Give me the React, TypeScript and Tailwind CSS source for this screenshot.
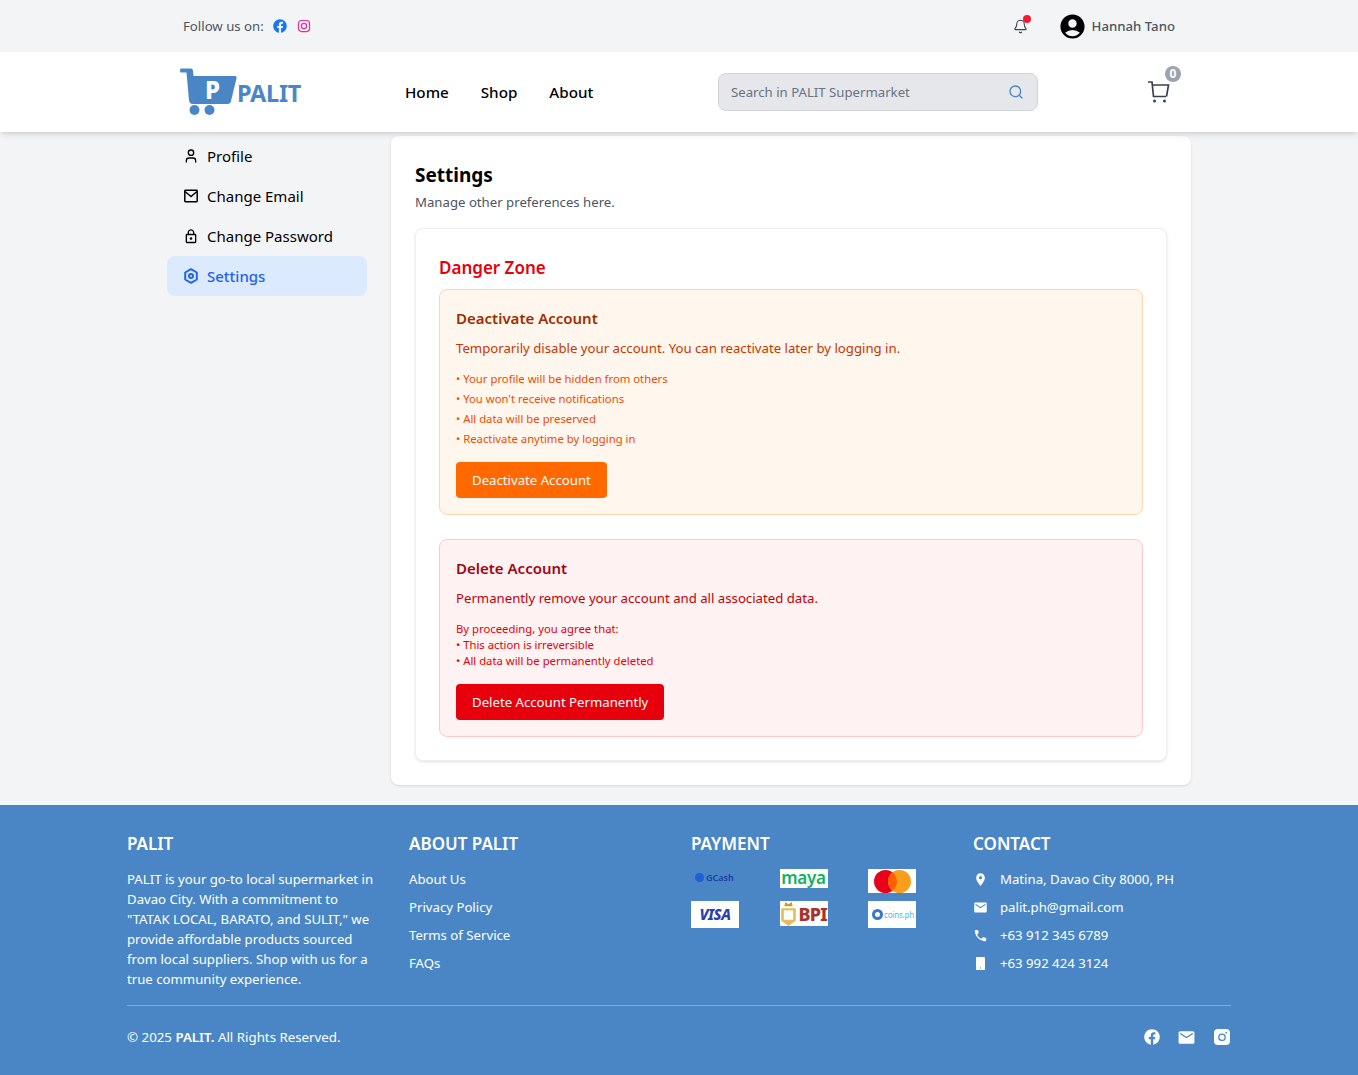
import { Bell, Search } from "lucide-react"
import { FaFacebook } from "react-icons/fa"
import { MdAccountCircle, MdEmail, MdLocationOn, MdOutlineLock, MdPhone } from "react-icons/md"
import { LuUser } from "react-icons/lu"

const font = "font-['Noto_Sans','Open_Sans',sans-serif]"

function InstaIcon({ className }: { className?: string }) {
    return (
        <svg viewBox="0 0 16 16" fill="none" stroke="currentColor" strokeWidth="1.4" className={className}>
            <rect x="1.7" y="1.7" width="12.6" height="12.6" rx="3.4" />
            <circle cx="8" cy="8" r="3" />
            <circle cx="11.6" cy="4.4" r="0.5" fill="currentColor" stroke="none" />
        </svg>
    )
}

function InstaSolid() {
    return (
        <svg viewBox="0 0 16 16" className="w-4 h-4">
            <rect x="0" y="0" width="16" height="16" rx="4" fill="#fff" />
            <circle cx="8" cy="8.3" r="3.2" fill="none" stroke="#4a86c6" strokeWidth="1.3" />
            <circle cx="12.2" cy="3.8" r="0.9" fill="#4a86c6" />
        </svg>
    )
}

function MailOutline() {
    return (
        <svg viewBox="0 0 14 14" fill="none" stroke="#000" strokeWidth="1.5" className="w-[14px] h-[14px]">
            <rect x="0.8" y="1.3" width="12.4" height="11.4" rx="0.6" />
            <path d="M1 2.5 L7 7.500 L13 2.500" />
        </svg>
    )
}

function PhoneSolid() {
    return (
        <svg viewBox="0 0 15 15" className="w-[15px] h-[15px] shrink-0">
            <rect x="3" y="1" width="9" height="13" rx="0.8" fill="#fff" />
            <rect x="7" y="11.500" width="1" height="1" fill="#4a86c6" />
        </svg>
    )
}

function Logo() {
    return (
        <svg viewBox="0 0 58 48" className="w-[58px] h-[48px]">
            <path d="M1 1.5 H11 Q12.5 1.5 13 3.5 L13.5 9 H55 Q57 9 56.5 11.5 L51 34 Q50.5 37 47.500 37 H13 Q9.500 37 9 33.500 L6.500 5.500 H1 Q0 5.500 0 3.500 Q0 1.500 1 1.500 Z" fill="#4a86c6" />
            <circle cx="14.500" cy="43" r="5" fill="#4a86c6" />
            <circle cx="29.500" cy="43" r="5" fill="#4a86c6" />
            <text x="25" y="32" fontSize="24" fontWeight="800" fill="#fff" fontFamily="Noto Sans" >P</text>
        </svg>
    )
}

function Cart() {
    return (
        <svg viewBox="0 0 24 24" fill="none" stroke="#374151" strokeWidth="1.7" className="w-6 h-6">
            <path d="M2 2 H6 L7.500 16.500 H20" />
            <path d="M6.300 5 H22.500 L20.500 16.500" />
            <circle cx="8.500" cy="21" r="1.500" fill="#374151" stroke="none" />
            <circle cx="18.500" cy="21" r="1.500" fill="#374151" stroke="none" />
        </svg>
    )
}

function HexIcon() {
    return (
        <svg viewBox="0 0 16 16" fill="none" stroke="#2563eb" strokeWidth="2" className="w-4 h-4">
            <path d="M8 1.200 L13.800 4.500 V11.500 L8 14.800 L2.200 11.500 V4.500 Z" strokeLinejoin="round" />
            <circle cx="8" cy="8" r="2" />
        </svg>
    )
}

function PaymentLogos() {
    return (
        <div className="grid grid-cols-[48px_48px_48px] justify-between gap-y-2 w-[225px]">
            <div className="h-6 flex items-start pt-[3px] pl-1 gap-[2px]">
                <div className="w-[9px] h-[9px] rounded-full bg-[#1d5fd6] mt-[1px] shrink-0"></div>
                <span className="text-[9px] leading-[11px] font-semibold text-[#1b3fa8]">GCash</span>
            </div>
            <div className="h-[19px] bg-white flex items-start justify-center">
                <span className="text-[17px] leading-[17px] font-semibold text-[#0fb25f] tracking-[-0.3px]">maya</span>
            </div>
            <div className="h-6 bg-white flex items-center justify-center">
                <svg viewBox="0 0 37 23" className="w-[37px] h-[23px]">
                    <circle cx="11.500" cy="11.500" r="11.500" fill="#eb001b" />
                    <circle cx="25.500" cy="11.500" r="11.500" fill="#f79e1b" />
                    <path d="M18.500 2.400 A11.500 11.500 0 0 1 18.500 20.600 A11.500 11.500 0 0 1 18.500 2.400 Z" fill="#ff5f00" />
                </svg>
            </div>
            <div className="h-[27px] bg-white flex items-center justify-center">
                <span className="text-[15px] font-extrabold italic text-[#2a3fae] tracking-[-0.5px]">VISA</span>
            </div>
            <div className="h-[25px] bg-white flex items-center gap-[2px]">
                <svg viewBox="0 0 16 24" className="w-[17px] h-[25px] shrink-0">
                    <path d="M1 7 H15 V19 L8 24 L1 19 Z" fill="#e4bd5a" />
                    <path d="M4 5 L5 1 L8 3 L11 1 L12 5 Z" fill="#c99a32" />
                    <rect x="3.500" y="9" width="9" height="9" fill="#fff" />
                </svg>
                <span className="text-[18px] leading-[20px] font-extrabold text-[#a8322d] tracking-[-0.8px]">BPI</span>
            </div>
            <div className="h-[27px] bg-white flex items-center pl-1 gap-[1px]">
                <div className="w-[11px] h-[11px] rounded-full border-[3px] border-[#3b78c4] shrink-0"></div>
                <span className="text-[8px] text-[#45c3f0] tracking-[-0.2px]">coins.ph</span>
            </div>
        </div>
    )
}

export default function App() {
    const sideItems = [
        { label: "Profile", icon: <LuUser size={16} className="text-black" /> },
        { label: "Change Email", icon: <MailOutline /> },
        { label: "Change Password", icon: <MdOutlineLock size={17} className="text-black" /> },
    ]

    return (
        <div className={`${font} min-h-screen bg-[#f3f4f6] flex flex-col`}>
            <div className="h-[52px] bg-[#f3f4f6]">
                <div className="max-w-5xl mx-auto h-full px-4 flex items-center justify-between">
                    <div className="flex items-center">
                        <span className="text-[13.2px] text-[#4b5563] pt-[1px]">Follow us on:</span>
                        <FaFacebook size={14} className="text-[#1877f2] ml-[9px]" />
                        <InstaIcon className="w-[14px] h-[14px] text-[#ec2f92] ml-[10px]" />
                    </div>
                    <div className="flex items-center">
                        <div className="relative mr-[30px]">
                            <Bell size={15} strokeWidth={1.7} className="text-[#374151]" />
                            <div className="absolute -top-[4px] left-[10px] w-2 h-2 rounded-full bg-[#ef1c2e]"></div>
                        </div>
                        <MdAccountCircle size={29} className="text-black" />
                        <span className="text-[13.2px] font-medium text-[#4b5563] ml-[5px] pt-[1px]">Hannah Tano</span>
                    </div>
                </div>
            </div>

            <header className="h-20 bg-white shadow-md relative z-10">
                <div className="max-w-5xl mx-auto h-full flex items-center">
                    <div className="flex items-center ml-[13px] w-[225px] pb-[2px]">
                        <Logo />
                        <span className="text-[23.5px] font-bold text-[#4a86c6] tracking-[-0.3px] mt-[5px] -ml-[1px]">PALIT</span>
                    </div>
                    <nav className="flex items-center gap-8 w-[190px]">
                        <a className="text-[15.2px] font-medium text-black">Home</a>
                        <a className="text-[15.2px] font-medium text-black">Shop</a>
                        <a className="text-[15.2px] font-medium text-black">About</a>
                    </nav>
                    <div className="ml-[123px] w-80 h-[38px] rounded-lg bg-[#e5e7eb] border border-[#d1d5db] flex items-center justify-between px-3">
                        <span className="text-[13.2px] text-[#6b7280] pt-[1px]">Search in PALIT Supermarket</span>
                        <Search size={16} className="text-[#4a86c6] mr-[1px]" />
                    </div>
                    <div className="relative ml-[108px] mt-0">
                        <Cart />
                        <div className="absolute -top-[14px] left-[19px] w-4 h-4 rounded-full bg-[#9ca3af] text-white text-[12px] font-bold flex items-center justify-center">0</div>
                    </div>
                </div>
            </header>

            <main className="max-w-5xl w-full mx-auto flex gap-6 pt-1 pb-5">
                <aside className="w-[200px] shrink-0">
                    {sideItems.map((item) => (
                        <div key={item.label} className="h-10 px-4 flex items-center gap-[8px] text-black">
                            <span className="w-4 flex justify-center">{item.icon}</span>
                            <span className="text-[15px]">{item.label}</span>
                        </div>
                    ))}
                    <div className="h-10 px-4 flex items-center gap-[8px] rounded-lg bg-[#dbeafe] text-[#2563eb]">
                        <HexIcon />
                        <span className="text-[15px] font-medium">Settings</span>
                    </div>
                </aside>

                <section className="w-[800px] bg-white rounded-lg shadow-sm p-6">
                    <h1 className="text-[19px] font-bold text-black leading-[28px] mt-[1px]">Settings</h1>
                    <p className="text-[13.2px] text-[#4b5563] leading-5 mt-[3px]">Manage other preferences here.</p>

                    <div className="mt-[16px] rounded-lg ring-1 ring-inset ring-[#eeeff1] shadow-sm px-6 pt-6 pb-6">
                        <h2 className="text-[17px] font-semibold text-[#e7000b] leading-[28px] mt-[2px]">Danger Zone</h2>

                        <div className="mt-[7px] rounded-lg border border-[#ffd6a8] bg-[#fff7ed] px-4 pt-4 pb-4 h-[226px]">
                            <h3 className="text-[15px] font-semibold text-[#9f2d00] leading-6">Deactivate Account</h3>
                            <p className="text-[13.2px] text-[#ca3500] leading-5 mt-[8px]">Temporarily disable your account. You can reactivate later by logging in.</p>
                            <ul className="mt-[11px] text-[11.3px] text-[#f54900]">
                                <li className="leading-5">• Your profile will be hidden from others</li>
                                <li className="leading-5">• You won't receive notifications</li>
                                <li className="leading-5">• All data will be preserved</li>
                                <li className="leading-5">• Reactivate anytime by logging in</li>
                            </ul>
                            <button className="mt-[13px] h-9 px-4 pt-[1px] rounded bg-[#ff6900] text-white text-[13.2px]">Deactivate Account</button>
                        </div>

                        <div className="mt-6 rounded-lg border border-[#ffc9c9] bg-[#fef2f2] px-4 pt-4 pb-4 h-[198px]">
                            <h3 className="text-[15px] font-semibold text-[#9f0712] leading-6">Delete Account</h3>
                            <p className="text-[13.2px] text-[#c10007] leading-5 mt-[8px]">Permanently remove your account and all associated data.</p>
                            <div className="mt-[13px] text-[11.3px] text-[#e7000b] leading-4">
                                <div>By proceeding, you agree that:</div>
                                <div>• This action is irreversible</div>
                                <div>• All data will be permanently deleted</div>
                            </div>
                            <button className="mt-[15px] h-9 px-4 pt-[1px] rounded bg-[#e7000b] text-white text-[13.2px]">Delete Account Permanently</button>
                        </div>
                    </div>
                </section>
            </main>

            <footer className="h-[270px] bg-[#4a86c6] text-white">
                <div className="max-w-6xl mx-auto px-6 pt-[25px]">
                    <div className="grid grid-cols-4 gap-6 h-[176px] border-b border-white/30">
                        <div>
                            <h4 className="text-[17px] font-semibold leading-[28px]">PALIT</h4>
                            <p className="text-[13.2px] leading-5 mt-[11px] w-[250px]">PALIT is your go-to local supermarket in Davao City. With a commitment to "TATAK LOCAL, BARATO, and SULIT," we provide affordable products sourced from local suppliers. Shop with us for a true community experience.</p>
                        </div>
                        <div>
                            <h4 className="text-[17px] font-semibold leading-[28px]">ABOUT PALIT</h4>
                            <div className="mt-[11px] text-[13.2px] flex flex-col gap-2">
                                <a className="leading-5">About Us</a>
                                <a className="leading-5">Privacy Policy</a>
                                <a className="leading-5">Terms of Service</a>
                                <a className="leading-5">FAQs</a>
                            </div>
                        </div>
                        <div>
                            <h4 className="text-[17px] font-semibold leading-[28px] mb-[11px]">PAYMENT</h4>
                            <PaymentLogos />
                        </div>
                        <div>
                            <h4 className="text-[17px] font-semibold leading-[28px]">CONTACT</h4>
                            <div className="mt-[11px] text-[13.2px] flex flex-col gap-2">
                                <div className="flex items-center gap-3 leading-5"><MdLocationOn size={15} className="shrink-0" />Matina, Davao City 8000, PH</div>
                                <div className="flex items-center gap-3 leading-5"><MdEmail size={15} className="shrink-0" />palit.ph@gmail.com</div>
                                <div className="flex items-center gap-3 leading-5"><MdPhone size={15} className="shrink-0" />+63 912 345 6789</div>
                                <div className="flex items-center gap-3 leading-5"><PhoneSolid />+63 992 424 3124</div>
                            </div>
                        </div>
                    </div>
                    <div className="flex items-center justify-between pt-[21px]">
                        <p className="text-[13.3px] leading-5">© 2025 <span className="font-semibold">PALIT.</span> All Rights Reserved.</p>
                        <div className="flex items-center pr-[1px]">
                            <FaFacebook size={16} />
                            <MdEmail size={19} className="ml-[17px]" />
                            <span className="ml-[18px]"><InstaSolid /></span>
                        </div>
                    </div>
                </div>
            </footer>
        </div>
    )
}
